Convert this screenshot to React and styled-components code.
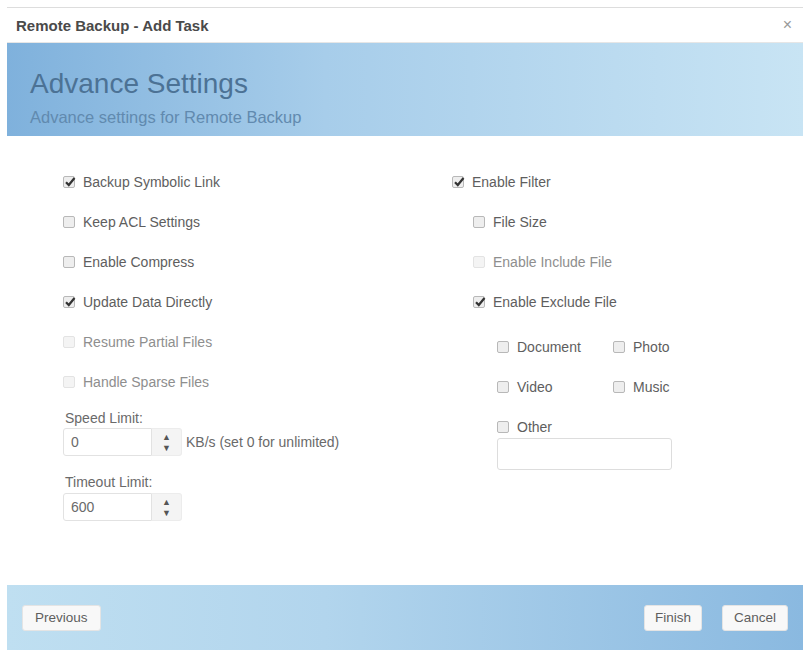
import styled, { createGlobalStyle } from "styled-components";

const Global = createGlobalStyle`
  html, body { margin: 0; padding: 0; background: #fff; }
  body { font-family: "Liberation Sans", Arial, sans-serif; color: #5e5e5e; }
`;

const Dialog = styled.div`
  margin: 7px 7px 0;
  width: 796px;
  border-top: 1px solid #ddd;
  display: flex;
  flex-direction: column;
`;

const TitleBar = styled.div`
  height: 34px;
  display: flex;
  align-items: center;
  justify-content: space-between;
  padding: 0 11px 0 9px;
  font-size: 15px;
  font-weight: bold;
  color: #4a4a4a;
  border-bottom: 1px solid #e6e6e6;
`;

const Close = styled.span`
  font-size: 16px;
  font-weight: normal;
  color: #999;
`;

const Banner = styled.div`
  height: 93px;
  padding: 16px 23px 0;
  box-sizing: border-box;
  background: linear-gradient(90deg, #7fb1dc 0%, #a7cdea 40%, #c8e4f4 100%);
  display: flex;
  flex-direction: column;
  justify-content: center;
`;

const BannerTitle = styled.div`
  font-size: 28px;
  color: #4c7295;
`;

const BannerSub = styled.div`
  font-size: 16.5px;
  color: #618aaf;
  margin-top: 8px;
`;

const Body = styled.div`
  height: 449px;
  display: grid;
  grid-template-columns: 389px 1fr;
  padding: 26px 0 0 56px;
  box-sizing: border-box;
`;

const Column = styled.div`
  display: flex;
  flex-direction: column;
`;

const Option = styled.label`
  display: flex;
  align-items: center;
  gap: 8px;
  height: 40px;
  font-size: 14px;
  color: ${(p) => (p.$disabled ? "#8e8e8e" : "#5e5e5e")};
  padding-left: ${(p) => p.$indent || 0}px;
`;

const Box = styled.span`
  width: 12px;
  height: 12px;
  flex: none;
  box-sizing: border-box;
  border: 1px solid ${(p) => (p.$disabled ? "#e3e3e3" : "#b8b8b8")};
  border-radius: 2px;
  background: ${(p) => (p.$disabled ? "#f4f4f4" : "#eee")};
  position: relative;
`;

const Check = ({ on, disabled }) => (
  <Box $disabled={disabled}>
    {on && (
      <svg width="12" height="12" viewBox="0 0 12 12" style={{ position: "absolute", left: 0, top: -1 }}>
        <path d="M2 6.2 L4.8 9 L10.5 2" stroke="#333" strokeWidth="2.2" fill="none" />
      </svg>
    )}
  </Box>
);

const CheckOption = ({ label, on, disabled, indent }) => (
  <Option $disabled={disabled} $indent={indent}>
    <Check on={on} disabled={disabled} />
    {label}
  </Option>
);

const FieldLabel = styled.div`
  font-size: 14px;
  line-height: 16px;
  color: #6a6a6a;
  margin: ${(p) => p.$top || 0}px 0 ${(p) => p.$bottom || 2}px 2px;
`;

const FieldRow = styled.div`
  display: flex;
  align-items: center;
  gap: 4px;
  font-size: 14px;
  color: #6a6a6a;
`;

const Spinner = styled.div`
  width: 119px;
  height: 28px;
  display: flex;
  font-size: 14px;
  color: #6a6a6a;
`;

const SpinValue = styled.div`
  flex: 1;
  display: flex;
  align-items: center;
  padding-left: 7px;
  border: 1px solid #e2e2e2;
  border-radius: 3px 0 0 3px;
`;

const SpinArrows = styled.div`
  width: 29px;
  border: 1px solid #ececec;
  border-left: none;
  border-radius: 0 3px 3px 0;
  background: #f4f4f4;
  display: flex;
  flex-direction: column;
  align-items: center;
  justify-content: center;
  gap: 3px;
  font-size: 9px;
  color: #555;
  line-height: 8px;
`;

const Pair = styled.div`
  display: grid;
  grid-template-columns: 116px 1fr;
  padding-left: 45px;
  margin-top: 5px;
`;

const TextBox = styled.div`
  margin: -9px 0 0 45px;
  width: 175px;
  height: 32px;
  box-sizing: border-box;
  border: 1px solid #ddd;
  border-radius: 3px;
`;

const Footer = styled.div`
  height: 65px;
  padding: 0 15px 0 15px;
  box-sizing: border-box;
  background: linear-gradient(90deg, #bfdff1 0%, #b2d5ed 40%, #8ab9e0 100%);
  display: flex;
  align-items: center;
  gap: 20px;
`;

const Button = styled.button`
  height: 26px;
  padding: 0 ${(p) => p.$pad || 10}px;
  font-family: inherit;
  font-size: 13.5px;
  color: #5e5e5e;
  background: #f8f8f8;
  border: 1px solid #e4e4e4;
  border-radius: 3px;
  margin-left: ${(p) => (p.$push ? "auto" : 0)};
`;

const Spin = ({ value }) => (
  <Spinner>
    <SpinValue>{value}</SpinValue>
    <SpinArrows>
      <span>▲</span>
      <span>▼</span>
    </SpinArrows>
  </Spinner>
);

export default function App() {
  return (
    <>
      <Global />
      <Dialog>
        <TitleBar>
          <span>Remote Backup - Add Task</span>
          <Close>×</Close>
        </TitleBar>
        <Banner>
          <BannerTitle>Advance Settings</BannerTitle>
          <BannerSub>Advance settings for Remote Backup</BannerSub>
        </Banner>
        <Body>
          <Column>
            <CheckOption label="Backup Symbolic Link" on />
            <CheckOption label="Keep ACL Settings" />
            <CheckOption label="Enable Compress" />
            <CheckOption label="Update Data Directly" on />
            <CheckOption label="Resume Partial Files" disabled />
            <CheckOption label="Handle Sparse Files" disabled />
            <FieldLabel $top={8}>Speed Limit:</FieldLabel>
            <FieldRow>
              <Spin value="0" />
              KB/s (set 0 for unlimited)
            </FieldRow>
            <FieldLabel $top={18} $bottom={3}>Timeout Limit:</FieldLabel>
            <FieldRow>
              <Spin value="600" />
            </FieldRow>
          </Column>
          <Column>
            <CheckOption label="Enable Filter" on />
            <CheckOption label="File Size" indent={21} />
            <CheckOption label="Enable Include File" indent={21} disabled />
            <CheckOption label="Enable Exclude File" indent={21} on />
            <Pair>
              <CheckOption label="Document" />
              <CheckOption label="Photo" />
              <CheckOption label="Video" />
              <CheckOption label="Music" />
              <CheckOption label="Other" />
            </Pair>
            <TextBox />
          </Column>
        </Body>
        <Footer>
          <Button $pad={12}>Previous</Button>
          <Button $push>Finish</Button>
          <Button $pad={11}>Cancel</Button>
        </Footer>
      </Dialog>
    </>
  );
}
